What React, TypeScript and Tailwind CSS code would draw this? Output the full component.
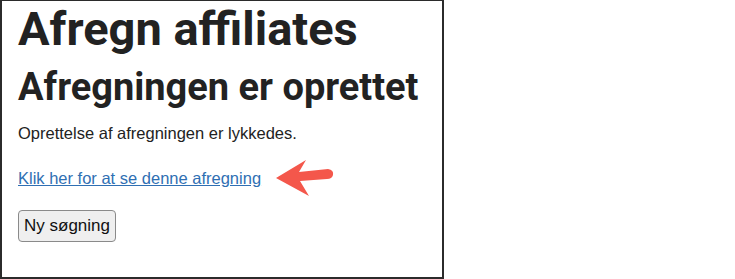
import React from "react";

export default function App() {
  return (
    <div className="w-[735px] h-[279px] bg-white">
      <div
        className="w-[444px] h-[279px] border-2 border-[#2b2b2b] border-t bg-white px-[16px] text-[#222]"
        style={{ fontFamily: "Roboto, 'Liberation Sans', sans-serif" }}
      >
        <h1 className="text-[47px] font-bold leading-[56px] mt-[0px]">Afregn affiliates</h1>
        <h2 className="text-[38px] font-bold leading-[44px] mt-[8px]">Afregningen er oprettet</h2>
        <div style={{ fontFamily: "'Liberation Sans', Arial, sans-serif" }}>
          <p className="text-[16.5px] leading-[20px] mt-[14px]">Oprettelse af afregningen er lykkedes.</p>
          <div className="flex items-center mt-[25px] h-[40px] -mb-[10px] relative -top-[10px]">
            <a href="#" className="text-[16.5px] leading-[20px] text-[#2f6fb3] underline">
              Klik her for at se denne afregning
            </a>
            <svg width="60" height="40" viewBox="0 0 60 40" className="ml-[13px] -mt-[2px]">
              <path d="M2 21 L32 3 L25 15 L54 12 Q60 13 59 18 Q58 22 53 22 L26 24 L35 39 Z" fill="#f4574b" />
            </svg>
          </div>
          <button className="mt-[12px] px-[4px] h-[32px] text-[17px] bg-[#efefef] border border-[#8a8a8a] rounded-[4px] text-[#111] w-[98px]">
            Ny søgning
          </button>
        </div>
      </div>
    </div>
  );
}
